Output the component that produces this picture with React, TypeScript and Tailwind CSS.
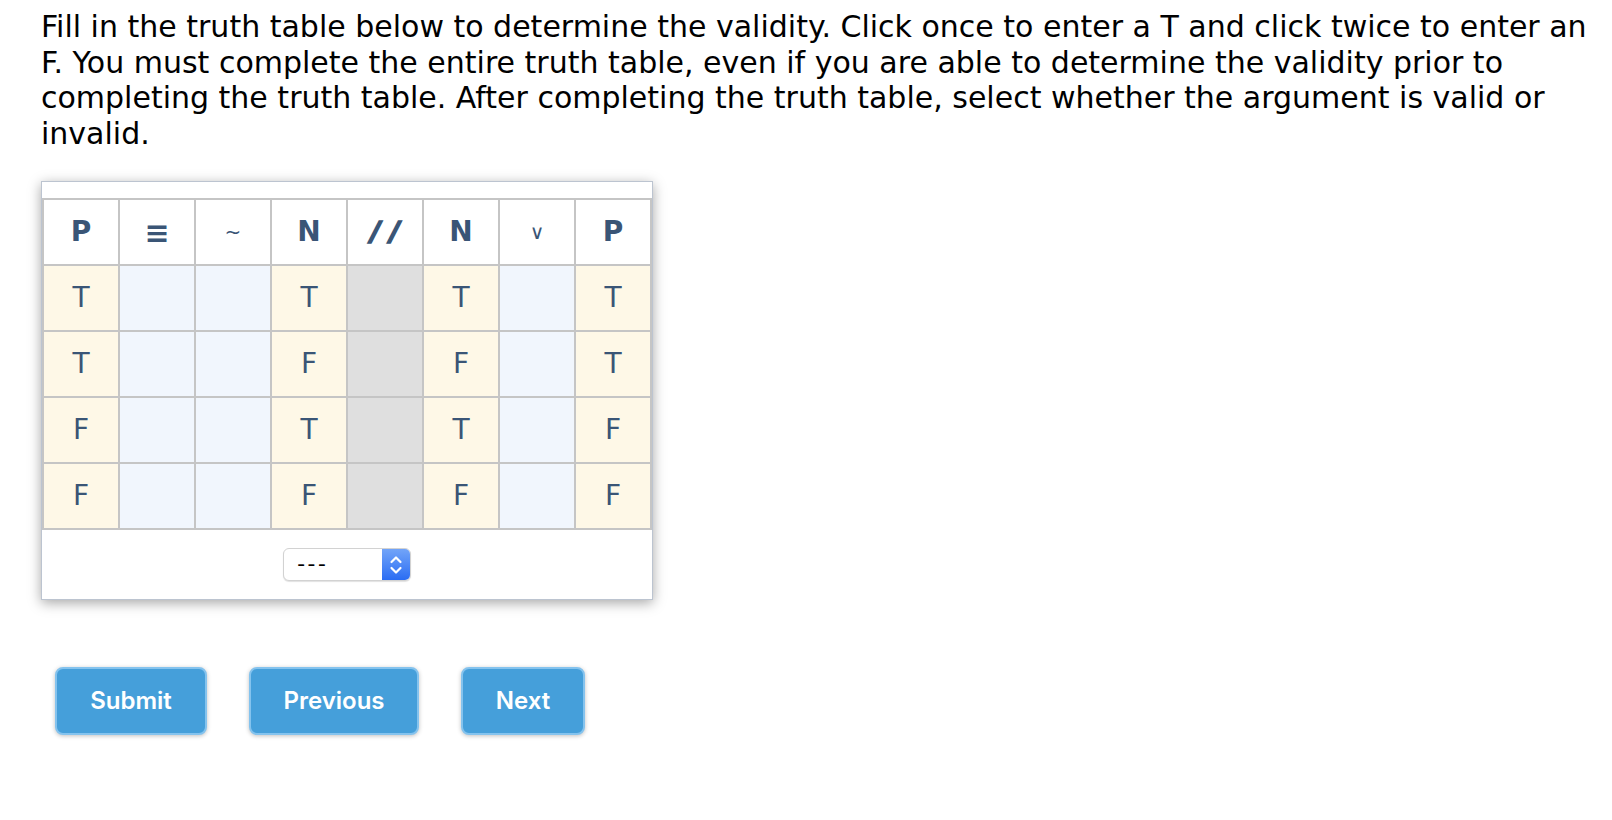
import React from "react";

type Cell = { v: string; kind: "given" | "input" | "blocked" };

const headers: { label: string; cls: string }[] = [
  { label: "P", cls: "text-[28px] font-bold" },
  { label: "≡", cls: "text-[30px] font-bold" },
  { label: "~", cls: "text-[20px] font-normal" },
  { label: "N", cls: "text-[28px] font-bold" },
  { label: "/ /", cls: "text-[27px] font-bold italic [-webkit-text-stroke:1.5px_#3a5576]" },
  { label: "N", cls: "text-[28px] font-bold" },
  { label: "∨", cls: "text-[20px] font-normal" },
  { label: "P", cls: "text-[28px] font-bold" },
];

const rows: string[][] = [
  ["T", "", "", "T", "", "T", "", "T"],
  ["T", "", "", "F", "", "F", "", "T"],
  ["F", "", "", "T", "", "T", "", "F"],
  ["F", "", "", "F", "", "F", "", "F"],
];

const kinds: Cell["kind"][] = ["given", "input", "input", "given", "blocked", "given", "input", "given"];

const bg = {
  given: "bg-[#fef8e7]",
  input: "bg-[#f1f6fd]",
  blocked: "bg-[#dfdfdf]",
};

const Chevrons = () => (
  <svg width="14" height="22" viewBox="0 0 14 22" fill="none" stroke="white" strokeWidth="2.2" strokeLinecap="round" strokeLinejoin="round">
    <path d="M2.5 8 L7 3.5 L11.5 8" />
    <path d="M2.5 14 L7 18.5 L11.5 14" />
  </svg>
);

const Button = ({ label, width }: { label: string; width: string }) => (
  <button
    className={`${width} h-[68px] rounded-[8px] border-2 border-[#84c3ee] bg-[#459fda] text-[24px] font-semibold text-white shadow-[0_1px_4px_rgba(0,0,0,0.25)]`}
    style={{ fontFamily: "Inter, Roboto, sans-serif" }}
  >
    {label}
  </button>
);

export default function App() {
  return (
    <div className="min-h-screen bg-white pl-[41px] pr-[8px] pt-[9px]" style={{ fontFamily: '"DejaVu Sans", Verdana, sans-serif' }}>
      <p className="text-[30px] leading-[35.5px] text-black">
        Fill in the truth table below to determine the validity. Click once to enter a T and click twice to enter an F. You must
        complete the entire truth table, even if you are able to determine the validity prior to completing the truth table. After
        completing the truth table, select whether the argument is valid or invalid.
      </p>

      <div className="mt-[30px] w-[612px] border border-[#bcc4d0] bg-white shadow-[0_3px_12px_rgba(0,0,0,0.35)]">
        <div className="h-[16px]" />
        <table className="w-full table-fixed border-collapse text-[#3a5576]">
          <thead>
            <tr className="h-[66px]">
              {headers.map((h, i) => (
                <th key={i} className={`border-2 border-[#c5c5c5] bg-white text-center ${h.cls}`}>
                  {h.label}
                </th>
              ))}
            </tr>
          </thead>
          <tbody>
            {rows.map((r, ri) => (
              <tr key={ri} className="h-[66px]">
                {r.map((v, ci) => (
                  <td key={ci} className={`border-2 border-[#c5c5c5] text-center text-[28px] ${bg[kinds[ci]]}`}>
                    {v}
                  </td>
                ))}
              </tr>
            ))}
          </tbody>
        </table>
        <div className="flex h-[69px] items-center justify-center">
          <div className="flex h-[33px] w-[128px] overflow-hidden rounded-[6px] border border-[#d2d2d2] bg-white shadow-[0_1px_1px_rgba(0,0,0,0.12)]">
            <div className="flex flex-1 items-center pl-[13px] text-[18px] font-medium leading-none tracking-[2px] text-black" style={{ fontFamily: "Inter, sans-serif" }}>
              ---
            </div>
            <div className="flex w-[28px] items-center justify-center bg-gradient-to-b from-[#72a4f8] to-[#2a6cf3]">
              <Chevrons />
            </div>
          </div>
        </div>
      </div>

      <div className="mt-[67px] flex gap-[42px] pl-[14px]">
        <Button label="Submit" width="w-[152px]" />
        <Button label="Previous" width="w-[170px]" />
        <Button label="Next" width="w-[124px]" />
      </div>
    </div>
  );
}
